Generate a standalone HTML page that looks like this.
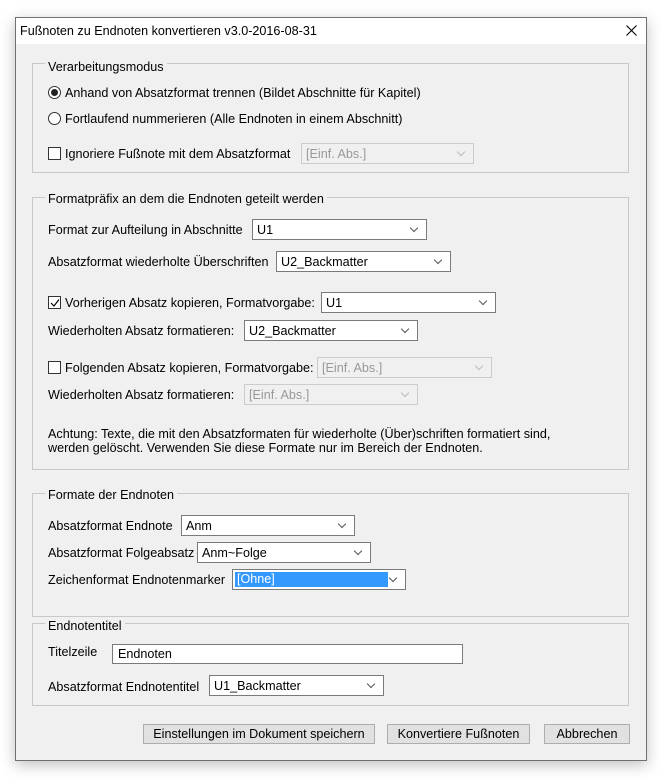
<!DOCTYPE html>
<html><head><meta charset="utf-8"><style>
*{margin:0;padding:0;box-sizing:border-box}
body{width:667px;height:781px;background:#fff;position:relative;font-family:"Liberation Sans",sans-serif;font-size:12.6px;color:#000;overflow:hidden}
.win{position:absolute;left:15px;top:17px;width:632px;height:744px;background:#f0f0f0;border:1px solid #707070;box-shadow:0 4px 14px rgba(0,0,0,.25)}
.tb{position:absolute;left:0;top:0;width:630px;height:26px;background:#fff}
.a{position:absolute;white-space:nowrap;line-height:14px;margin-top:1px}
.g{position:absolute;border:1px solid #c8c8c8}
.gl{position:absolute;background:#f0f0f0;padding:0 3px;line-height:14px;white-space:nowrap;margin-top:1px}
.s{position:absolute;height:21px;background:#fff;border:1px solid #7a7a7a;padding-left:4px;line-height:20px;white-space:nowrap}
.s::after{content:"";position:absolute;right:9px;top:5px;width:5px;height:5px;border-right:1px solid #555;border-bottom:1px solid #555;transform:rotate(45deg)}
.s.d{border-color:#ccc;color:#999;background:#f0f0f0}
.s.d::after{border-color:#bbb}
.s.n::after{display:none}
.cb{position:absolute;width:13px;height:13px;border:1px solid #333;background:#fff}
.rb{position:absolute;width:13px;height:13px;border:1px solid #333;border-radius:50%;background:#fff}
.b{position:absolute;height:20px;background:#e1e1e1;border:1px solid #adadad;text-align:center;line-height:19px}
</style></head><body>
<div class="win"><div class="tb"></div></div>
<div class="a" style="left:20px;top:23px">Fußnoten zu Endnoten konvertieren v3.0-2016-08-31</div>
<svg style="position:absolute;left:626px;top:25px" width="11" height="11"><path d="M0.5 0.5L10.5 10.5M10.5 0.5L0.5 10.5" stroke="#000" stroke-width="1.1"/></svg>

<div class="g" style="left:32px;top:63px;width:597px;height:110px"></div>
<div class="gl" style="left:45px;top:59px">Verarbeitungsmodus</div>
<div class="rb" style="left:48px;top:86px"></div><div style="position:absolute;left:51px;top:89px;width:7px;height:7px;border-radius:50%;background:#222"></div>
<div class="a" style="left:65px;top:85px">Anhand von Absatzformat trennen (Bildet Abschnitte für Kapitel)</div>
<div class="rb" style="left:48px;top:112px"></div>
<div class="a" style="left:65px;top:111px">Fortlaufend nummerieren (Alle Endnoten in einem Abschnitt)</div>
<div class="cb" style="left:48px;top:147px"></div>
<div class="a" style="left:65px;top:146px">Ignoriere Fußnote mit dem Absatzformat</div>
<div class="s d" style="left:301px;top:143px;width:173px">[Einf. Abs.]</div>

<div class="g" style="left:32px;top:197px;width:597px;height:273px"></div>
<div class="gl" style="left:45px;top:191px">Formatpräfix an dem die Endnoten geteilt werden</div>
<div class="a" style="left:48px;top:222px">Format zur Aufteilung in Abschnitte</div>
<div class="s" style="left:252px;top:219px;width:175px">U1</div>
<div class="a" style="left:48px;top:254px">Absatzformat wiederholte Überschriften</div>
<div class="s" style="left:276px;top:251px;width:175px">U2_Backmatter</div>
<div class="cb" style="left:48px;top:296px"></div>
<svg style="position:absolute;left:50px;top:298px" width="10" height="10"><path d="M1 5L4 8L9 1.5" stroke="#000" stroke-width="1.2" fill="none"/></svg>
<div class="a" style="left:65px;top:295px">Vorherigen Absatz kopieren, Formatvorgabe:</div>
<div class="s" style="left:321px;top:292px;width:175px">U1</div>
<div class="a" style="left:48px;top:323px">Wiederholten Absatz formatieren:</div>
<div class="s" style="left:244px;top:320px;width:174px">U2_Backmatter</div>
<div class="cb" style="left:48px;top:361px"></div>
<div class="a" style="left:65px;top:360px">Folgenden Absatz kopieren, Formatvorgabe:</div>
<div class="s d" style="left:317px;top:357px;width:175px">[Einf. Abs.]</div>
<div class="a" style="left:48px;top:387px">Wiederholten Absatz formatieren:</div>
<div class="s d" style="left:244px;top:384px;width:174px">[Einf. Abs.]</div>
<div class="a" style="left:48px;top:426px">Achtung: Texte, die mit den Absatzformaten für wiederholte (Über)schriften formatiert sind,</div>
<div class="a" style="left:48px;top:440px">werden gelöscht. Verwenden Sie diese Formate nur im Bereich der Endnoten.</div>

<div class="g" style="left:32px;top:493px;width:597px;height:124px"></div>
<div class="gl" style="left:45px;top:487px">Formate der Endnoten</div>
<div class="a" style="left:48px;top:518px">Absatzformat Endnote</div>
<div class="s" style="left:181px;top:515px;width:174px">Anm</div>
<div class="a" style="left:48px;top:545px">Absatzformat Folgeabsatz</div>
<div class="s" style="left:197px;top:542px;width:174px">Anm~Folge</div>
<div class="a" style="left:48px;top:572px">Zeichenformat Endnotenmarker</div>
<div class="s" style="left:232px;top:569px;width:174px;padding:2px"><div style="width:153px;height:15px;background:#3399ff;color:#fff;line-height:15px;padding-left:2px">[Ohne]</div></div>

<div class="g" style="left:32px;top:623px;width:597px;height:83px"></div>
<div class="gl" style="left:45px;top:618px">Endnotentitel</div>
<div class="a" style="left:48px;top:644px">Titelzeile</div>
<div class="s n" style="left:112px;top:644px;width:351px;height:20px;line-height:19px;padding-left:5px">Endnoten</div>
<div class="a" style="left:48px;top:679px">Absatzformat Endnotentitel</div>
<div class="s" style="left:209px;top:675px;width:175px">U1_Backmatter</div>

<div class="b" style="left:143px;top:724px;width:232px">Einstellungen im Dokument speichern</div>
<div class="b" style="left:387px;top:724px;width:143px">Konvertiere Fußnoten</div>
<div class="b" style="left:544px;top:724px;width:86px">Abbrechen</div>
</body></html>
